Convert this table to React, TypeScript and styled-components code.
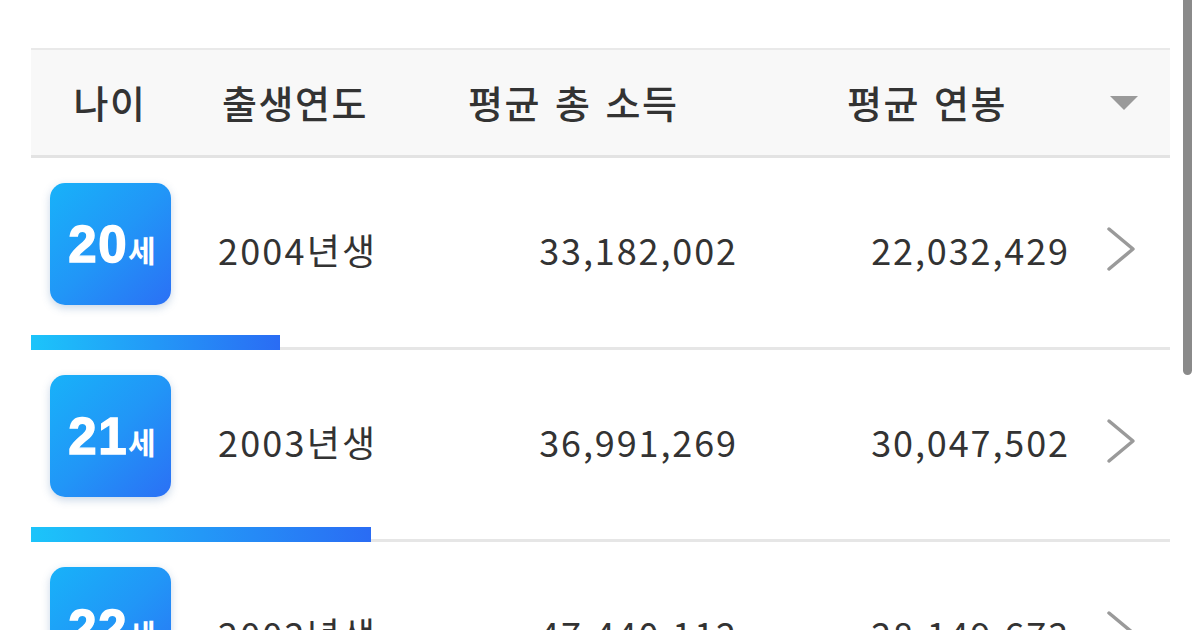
import React from "react";
import styled, { createGlobalStyle } from "styled-components";

const Global = createGlobalStyle`
  html, body { margin: 0; padding: 0; background: #fff; overflow: hidden; }
  body { width: 1200px; height: 630px; font-family: "Noto Sans CJK KR", "Noto Sans", sans-serif; color: #333; }
`;

const Page = styled.div`
  position: relative;
  width: 1200px;
  height: 630px;
  overflow: hidden;
  padding: 48px 30px 0 31px;
  box-sizing: border-box;
`;

const ScrollThumb = styled.div`
  position: absolute;
  top: 0;
  right: 8px;
  width: 9px;
  height: 375px;
  border-radius: 0 0 5px 5px;
  background: #8a8a8a;
`;

const Table = styled.div`
  display: flex;
  flex-direction: column;
`;

const Header = styled.div`
  display: flex;
  align-items: center;
  height: 105px;
  background: #f8f8f8;
  border-top: 2px solid #e9e9e9;
  border-bottom: 3px solid #e3e3e3;
  font-size: 38px;
  font-weight: 500;
  color: #333;
`;

const HeadCell = styled.div<{ $w: number; $center?: boolean; $pad?: number }>`
  width: ${(p) => p.$w}px;
  flex: none;
  text-align: ${(p) => (p.$center ? "center" : "left")};
  padding-left: ${(p) => p.$pad ?? 0}px;
  box-sizing: border-box;
  white-space: pre;
  letter-spacing: 1.5px;
  word-spacing: 4px;
  line-height: 1;
  margin-top: -2px;
`;

const Caret = styled.svg`
  margin-left: auto;
  margin-right: 32px;
  flex: none;
`;

const Row = styled.div`
  display: flex;
  flex-direction: column;
  padding-top: 25px;
`;

const RowMain = styled.div`
  display: flex;
  align-items: center;
  height: 122px;
`;

const Badge = styled.div`
  width: 121px;
  height: 122px;
  margin-left: 19px;
  flex: none;
  border-radius: 15px;
  background: linear-gradient(135deg, #18b2f9 0%, #2196f7 50%, #2b70f5 100%);
  box-shadow: 0 3px 9px rgba(60, 110, 170, 0.28);
  display: flex;
  align-items: center;
  justify-content: center;
  padding-top: 1px;
  box-sizing: border-box;
  color: #fff;
`;

const AgeLabel = styled.div`
  display: flex;
  align-items: baseline;
  line-height: 1;
  margin-left: 3px;
`;

const AgeNum = styled.span`
  font-family: "Liberation Sans", Arial, sans-serif;
  font-weight: 700;
  font-size: 51px;
  letter-spacing: 1.5px;
  -webkit-text-stroke: 1.4px #fff;
`;

const AgeUnit = styled.span`
  font-family: "Noto Sans CJK KR", sans-serif;
  font-weight: 700;
  font-size: 30px;
  margin-left: 0px;
`;

const Birth = styled.div`
  margin-left: 47px;
  margin-top: 10px;
  width: 200px;
  flex: none;
  font-size: 36px;
  letter-spacing: 2.2px;
  color: #333;
`;

const Num = styled.div<{ $w: number }>`
  width: ${(p) => p.$w}px;
  flex: none;
  margin-top: 10px;
  text-align: right;
  font-size: 36px;
  letter-spacing: 1.9px;
  color: #333;
`;

const Chevron = styled.svg`
  margin-left: 36px;
  margin-top: 10px;
  flex: none;
`;

const Track = styled.div`
  margin-top: 30px;
  height: 15px;
  display: flex;
  align-items: flex-end;
  background: linear-gradient(#e6e6e6, #e6e6e6) bottom / 100% 3px no-repeat;
`;

const Fill = styled.div`
  height: 15px;
  background: linear-gradient(90deg, #1cc4fa 0%, #2a6cf4 100%);
`;

const rows = [
  { age: 20, birth: 2004, income: "33,182,002", salary: "22,032,429", bar: 249 },
  { age: 21, birth: 2003, income: "36,991,269", salary: "30,047,502", bar: 340 },
  { age: 22, birth: 2002, income: "47,440,112", salary: "28,149,673", bar: 520 },
];

export default function App() {
  return (
    <>
      <Global />
      <Page>
        <Table>
          <Header>
            <HeadCell $w={158} $center>나이</HeadCell>
            <HeadCell $w={279} $pad={33}>출생연도</HeadCell>
            <HeadCell $w={379}>평균 총 소득</HeadCell>
            <HeadCell $w={250}>평균 연봉</HeadCell>
            <Caret width="28" height="14" viewBox="0 0 28 14">
              <polygon points="0,0 28,0 14,14" fill="#9a9a9a" />
            </Caret>
          </Header>
          {rows.map((r) => (
            <Row key={r.age}>
              <RowMain>
                <Badge>
                  <AgeLabel>
                    <AgeNum>{r.age}</AgeNum>
                    <AgeUnit>세</AgeUnit>
                  </AgeLabel>
                </Badge>
                <Birth>{r.birth}년생</Birth>
                <Num $w={320}>{r.income}</Num>
                <Num $w={332}>{r.salary}</Num>
                <Chevron width="30" height="46" viewBox="0 0 30 46">
                  <polyline
                    points="3,3 27,23 3,43"
                    fill="none"
                    stroke="#9a9a9a"
                    strokeWidth="3.5"
                    strokeLinecap="round"
                    strokeLinejoin="round"
                  />
                </Chevron>
              </RowMain>
              <Track>
                <Fill style={{ width: r.bar }} />
              </Track>
            </Row>
          ))}
        </Table>
        <ScrollThumb />
      </Page>
    </>
  );
}
